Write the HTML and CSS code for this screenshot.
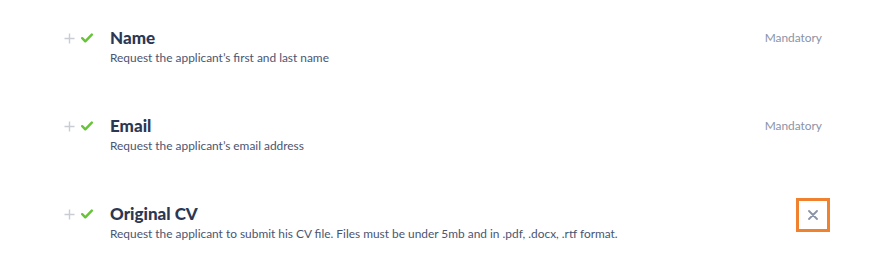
FILE: index.html
```html
<!DOCTYPE html>
<html>
<head>
<meta charset="utf-8">
<link rel="stylesheet" href="styles.css">
</head>
<body>
<div class="list">
  <div class="row">
    <div class="icons">
      <svg class="plus" width="11" height="11" viewBox="0 0 11 11"><path d="M5.5 0.5v10M0.5 5.5h10" stroke="#c9ccd3" stroke-width="1.4" fill="none"/></svg>
      <svg class="check" width="12" height="10" viewBox="0 0 12 10"><path d="M1.2 5.2l3.1 3.1L10.8 1.6" stroke="#66c437" stroke-width="2.4" fill="none" stroke-linecap="round" stroke-linejoin="round"/></svg>
    </div>
    <div class="text">
      <div class="title">Name</div>
      <div class="desc">Request the applicant’s first and last name</div>
    </div>
    <div class="side"><span class="mandatory">Mandatory</span></div>
  </div>
  <div class="row">
    <div class="icons">
      <svg class="plus" width="11" height="11" viewBox="0 0 11 11"><path d="M5.5 0.5v10M0.5 5.5h10" stroke="#c9ccd3" stroke-width="1.4" fill="none"/></svg>
      <svg class="check" width="12" height="10" viewBox="0 0 12 10"><path d="M1.2 5.2l3.1 3.1L10.8 1.6" stroke="#66c437" stroke-width="2.4" fill="none" stroke-linecap="round" stroke-linejoin="round"/></svg>
    </div>
    <div class="text">
      <div class="title">Email</div>
      <div class="desc">Request the applicant’s email address</div>
    </div>
    <div class="side"><span class="mandatory">Mandatory</span></div>
  </div>
  <div class="row">
    <div class="icons">
      <svg class="plus" width="11" height="11" viewBox="0 0 11 11"><path d="M5.5 0.5v10M0.5 5.5h10" stroke="#c9ccd3" stroke-width="1.4" fill="none"/></svg>
      <svg class="check" width="12" height="10" viewBox="0 0 12 10"><path d="M1.2 5.2l3.1 3.1L10.8 1.6" stroke="#66c437" stroke-width="2.4" fill="none" stroke-linecap="round" stroke-linejoin="round"/></svg>
    </div>
    <div class="text">
      <div class="title">Original CV</div>
      <div class="desc">Request the applicant to submit his CV file. Files must be under 5mb and in .pdf, .docx, .rtf format.</div>
    </div>
    <div class="side">
      <button class="remove" aria-label="Remove">
        <svg width="10" height="10" viewBox="0 0 10 10"><path d="M1 1l8 8M9 1l-8 8" stroke="#8a93a6" stroke-width="1.8" fill="none" stroke-linecap="round"/></svg>
      </button>
    </div>
  </div>
</div>
</body>
</html>
```
FILE: styles.css
```css
html, body {
  margin: 0;
  padding: 0;
  background: #ffffff;
}
body {
  font-family: Lato, "Noto Sans", sans-serif;
  color: #2c3852;
}
.list {
  display: flex;
  flex-direction: column;
  gap: 49px;
  padding: 27px 60px 0 64px;
}
.row {
  display: flex;
  align-items: flex-start;
}
.icons {
  display: flex;
  align-items: center;
  gap: 6px;
  width: 46px;
  height: 22px;
  flex: none;
}
.text {
  flex: 1;
  display: flex;
  flex-direction: column;
}
.title {
  font-size: 17px;
  font-weight: 900;
  line-height: 22px;
  color: #2c3852;
}
.desc {
  font-size: 11.9px;
  line-height: 16px;
  margin-top: 1px;
  color: #4a5571;
}
.side {
  display: flex;
  align-items: center;
  height: 22px;
}
.mandatory {
  font-size: 11.9px;
  color: #8a93a6;
  margin-top: -1px;
}
.remove {
  box-sizing: border-box;
  width: 34px;
  height: 34px;
  margin-top: 1px;
  margin-right: -8px;
  border: 3px solid #f0822f;
  border-radius: 0;
  background: #fff;
  display: flex;
  align-items: center;
  justify-content: center;
  padding: 0;
}
```
